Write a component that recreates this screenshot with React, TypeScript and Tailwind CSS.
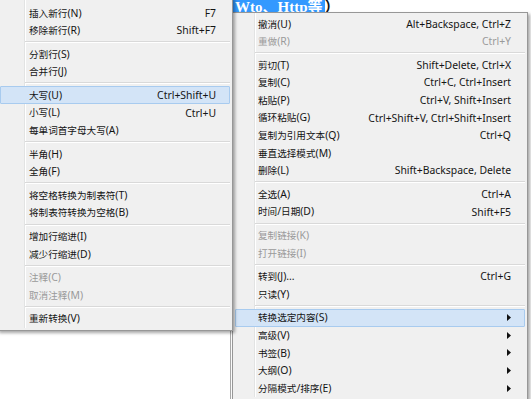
import React from "react";

type Item =
  | { label: string; shortcut?: string; disabled?: boolean; active?: boolean; sub?: boolean }
  | "sep";

const editItems: Item[] = [
  { label: "插入新行(N)", shortcut: "F7" },
  { label: "移除新行(R)", shortcut: "Shift+F7" },
  "sep",
  { label: "分割行(S)" },
  { label: "合并行(J)" },
  "sep",
  { label: "大写(U)", shortcut: "Ctrl+Shift+U", active: true },
  { label: "小写(L)", shortcut: "Ctrl+U" },
  { label: "每单词首字母大写(A)" },
  "sep",
  { label: "半角(H)" },
  { label: "全角(F)" },
  "sep",
  { label: "将空格转换为制表符(T)" },
  { label: "将制表符转换为空格(B)" },
  "sep",
  { label: "增加行缩进(I)" },
  { label: "减少行缩进(D)" },
  "sep",
  { label: "注释(C)", disabled: true },
  { label: "取消注释(M)", disabled: true },
  "sep",
  { label: "重新转换(V)" },
];

const mainItems: Item[] = [
  { label: "撤消(U)", shortcut: "Alt+Backspace, Ctrl+Z" },
  { label: "重做(R)", shortcut: "Ctrl+Y", disabled: true },
  "sep",
  { label: "剪切(T)", shortcut: "Shift+Delete, Ctrl+X" },
  { label: "复制(C)", shortcut: "Ctrl+C, Ctrl+Insert" },
  { label: "粘贴(P)", shortcut: "Ctrl+V, Shift+Insert" },
  { label: "循环粘贴(G)", shortcut: "Ctrl+Shift+V, Ctrl+Shift+Insert" },
  { label: "复制为引用文本(Q)", shortcut: "Ctrl+Q" },
  { label: "垂直选择模式(M)" },
  { label: "删除(L)", shortcut: "Shift+Backspace, Delete" },
  "sep",
  { label: "全选(A)", shortcut: "Ctrl+A" },
  { label: "时间/日期(D)", shortcut: "Shift+F5" },
  "sep",
  { label: "复制链接(K)", disabled: true },
  { label: "打开链接(I)", disabled: true },
  "sep",
  { label: "转到(J)...", shortcut: "Ctrl+G" },
  { label: "只读(Y)" },
  "sep",
  { label: "转换选定内容(S)", sub: true, active: true },
  { label: "高级(V)", sub: true },
  { label: "书签(B)", sub: true },
  { label: "大纲(O)", sub: true },
  { label: "分隔模式/排序(E)", sub: true },
];

// CJK runs are drawn a little smaller than the latin runs, as in the original font
const Label = ({ text }: { text: string }): JSX.Element => {
  const parts = text.split(/([\u3000-\u303f\u4e00-\u9fff]+)/).filter(Boolean);
  return (
    <span className="whitespace-nowrap">
      {parts.map((p, i) =>
        /[\u3000-\u303f\u4e00-\u9fff]/.test(p) ? (
          <span key={i} className="text-[9.6px]">
            {p}
          </span>
        ) : (
          <span key={i}>{p}</span>
        ),
      )}
    </span>
  );
};

const Arrow = (): JSX.Element => (
  <svg width="4" height="7" viewBox="0 0 4 7" className="mr-[7px] shrink-0">
    <path d="M0 0 L4 3.5 L0 7 Z" fill="#111" />
  </svg>
);

interface MenuProps {
  items: Item[];
  gutter: string; // width class of the icon column
  textPad: string; // gap between gutter line and text
  activePad: string; // text offset in a highlighted row
  topPad: string;
  className: string;
}

function Menu(props: MenuProps): JSX.Element {
  const Gutter = ({ children, h }: { children?: React.ReactNode; h: string }) => (
    <div className={`flex ${h}`}>
      <div className={`${props.gutter} shrink-0`} />
      <div className="flex flex-1 border-l border-[#e2e3e3] shadow-[inset_1px_0_0_#ffffff]">
        {children}
      </div>
    </div>
  );

  return (
    <div
      className={`absolute border border-[#979797] bg-[#f0f0f0] px-[2px] pb-[2px] shadow-[2px_2px_3px_rgba(0,0,0,0.35)] font-['Noto_Sans','Noto_Sans_CJK_SC',sans-serif] text-[10.4px] leading-none ${props.className}`}
    >
      <Gutter h={props.topPad} />
      {props.items.map((item, i) => {
        if (item === "sep")
          return (
            <Gutter key={i} h="h-[6px]">
              <div className="flex flex-1 flex-col justify-center">
                <div className="h-px bg-[#d9d9d9]" />
                <div className="h-px bg-white" />
              </div>
            </Gutter>
          );

        const color = item.disabled ? "text-[#9a9a9a]" : "text-[#141414]";
        const content = (
          <>
            <div className="flex-1">
              <Label text={item.label} />
            </div>
            {item.shortcut && <span className="mr-[7px] whitespace-nowrap">{item.shortcut}</span>}
            {item.sub && <Arrow />}
          </>
        );

        if (item.active)
          return (
            <div
              key={i}
              className={`flex h-[17.6px] items-center rounded-[1px] border border-[#a8cbef] bg-[#d3e4f7] pr-[6px] ${props.activePad} ${color}`}
            >
              {content}
            </div>
          );

        return (
          <div key={i} className={`flex h-[17.6px] ${color}`}>
            <div className={`${props.gutter} shrink-0`} />
            <div
              className={`flex flex-1 items-center border-l border-[#e2e3e3] pr-[7px] shadow-[inset_1px_0_0_#ffffff] ${props.textPad}`}
            >
              {content}
            </div>
          </div>
        );
      })}
    </div>
  );
}

export default function App(): JSX.Element {
  return (
    <div className="relative h-[399px] w-[531px] overflow-hidden bg-white">
      {/* editor text behind the menus */}
      <div className="flex h-[14px] items-end pl-[233px] font-['Liberation_Serif','Noto_Sans_CJK_SC',serif] text-[15px] font-bold leading-[14px]">
        <span className="bg-[#3399ff] px-[2px] text-white">Wto、Http等</span>
        <span className="text-[#111]">）</span>
      </div>
      <div className="flex h-[385px]">
        <div className="w-[231px] border-r border-[#a9a9a9]" />
        <div className="flex-1" />
      </div>

      <Menu
        items={mainItems}
        gutter="w-[19px]"
        textPad="pl-[3px]"
        activePad="pl-[22px]"
        topPad="h-[2px]"
        className="left-[232px] top-[12px] w-[296px]"
      />
      <Menu
        items={editItems}
        gutter="w-[24px]"
        textPad="pl-[4px]"
        activePad="pl-[28px]"
        topPad="h-[6px]"
        className="-left-[3px] -top-[3px] w-[236px]"
      />
    </div>
  );
}
